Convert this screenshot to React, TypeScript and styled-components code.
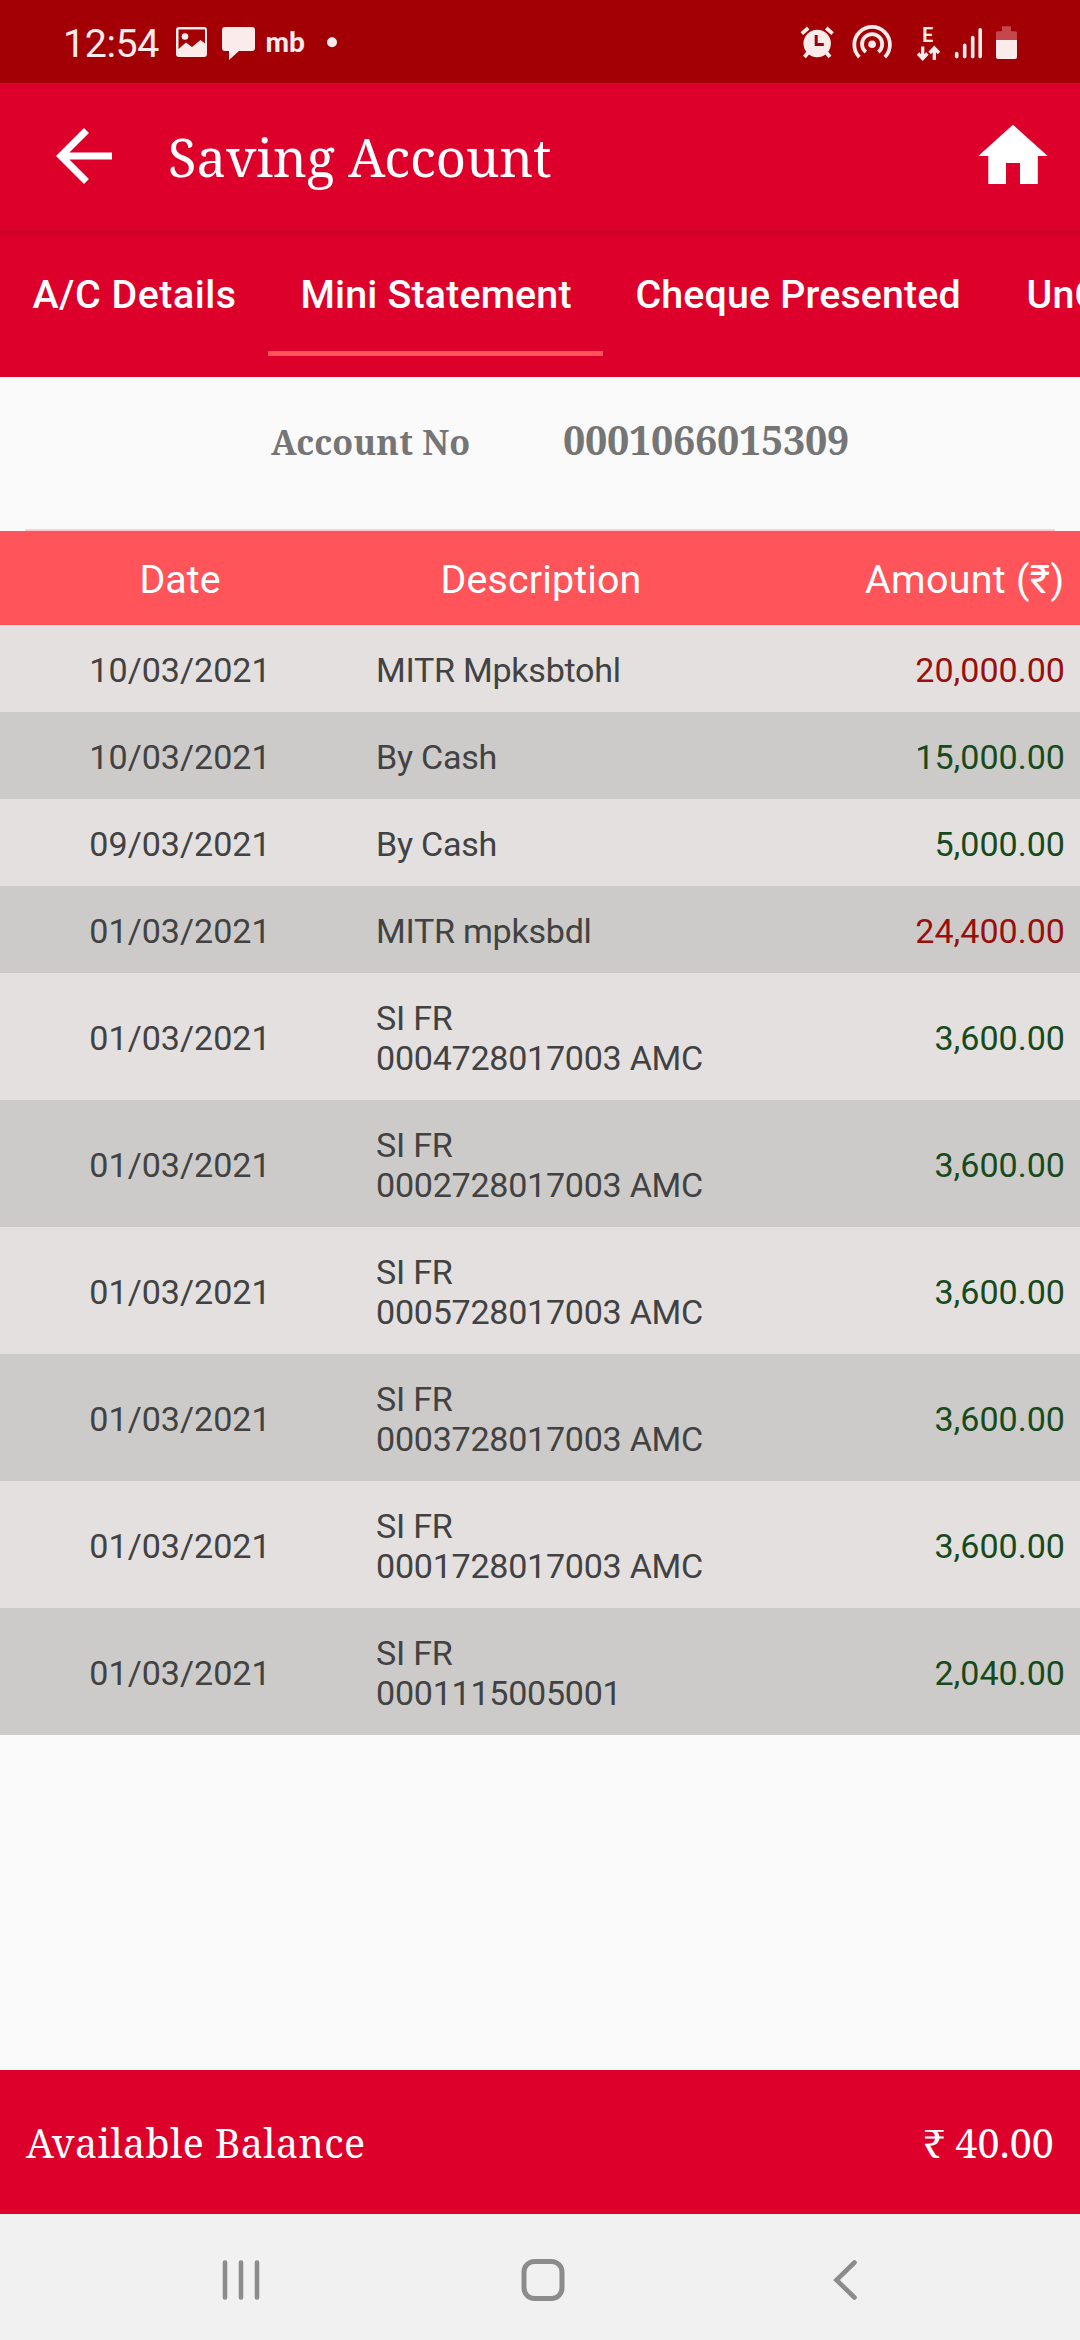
import React from "react";
import styled, { createGlobalStyle } from "styled-components";

const sans = `Roboto, "Noto Sans", sans-serif`;
const serif = `"Noto Serif", "DejaVu Serif Condensed", "DejaVu Serif", serif`;
const ICON = "#fbebea";

const GlobalStyle = createGlobalStyle`
  *, *::before, *::after { box-sizing: border-box; }
  html, body { margin: 0; padding: 0; background: #fafafa; }
  body { font-family: ${sans}; overflow: hidden; }
`;

const Screen = styled.div`
  width: 1080px;
  height: 2340px;
  display: flex;
  flex-direction: column;
  background: #fafafa;
  overflow: hidden;
`;

const StatusBar = styled.header`
  height: 83px;
  flex: none;
  display: flex;
  justify-content: space-between;
  padding: 0 60px 0 63px;
  background: #a20004;
  color: ${ICON};
`;

const StatusGroup = styled.div`
  display: flex;
  align-items: flex-start;
  svg { display: block; flex: none; }
`;

const Clock = styled.span`
  width: 110px;
  padding-top: 21px;
  font-size: 39.4px;
  line-height: 46px;
  letter-spacing: -0.4px;
`;

const AppBar = styled.div`
  height: 147px;
  flex: none;
  display: flex;
  align-items: center;
  padding: 0 32px 1px 42px;
  background: #dd002b;
  svg { display: block; flex: none; }
`;

const Title = styled.h1`
  flex: 1;
  margin: 0 0 0 42px;
  padding-top: 2px;
  font-family: ${serif};
  font-weight: 400;
  font-size: 52.5px;
  line-height: 72px;
  letter-spacing: -0.1px;
  color: #fff;
`;

const TabBar = styled.nav`
  height: 147px;
  flex: none;
  display: flex;
  padding-bottom: 21px;
  overflow: hidden;
  background: linear-gradient(#cb0028 0, #dd002b 9px);
`;

const Tab = styled.div<{ $active?: boolean; $width: number; $tracking: number }>`
  flex: none;
  width: ${(p) => p.$width}px;
  padding: 41px 0 0 32.5px;
  border-bottom: 5px solid ${(p) => (p.$active ? "#ff5459" : "transparent")};
  font-weight: 500;
  font-size: 39.4px;
  line-height: 48px;
  letter-spacing: ${(p) => p.$tracking}px;
  white-space: nowrap;
  color: #fff;
`;

const AccountPanel = styled.section`
  height: 154px;
  flex: none;
  margin: 0 25px;
  padding: 35px 0 0 246px;
  display: flex;
  align-items: baseline;
  border-bottom: 2px solid #ffcdcf;
  font-family: ${serif};
  font-weight: 700;
  color: #757575;
  line-height: 56px;
  white-space: nowrap;
`;

const AccountLabel = styled.span`
  width: 292px;
  font-size: 34.1px;
  letter-spacing: 0.15px;
`;

const AccountNumber = styled.span`
  font-size: 39.4px;
  letter-spacing: -0.25px;
`;

const Row = styled.div<{ $shade?: boolean; $tall?: boolean }>`
  height: ${(p) => (p.$tall ? 127 : 87)}px;
  flex: none;
  display: grid;
  grid-template-columns: 360px 1fr 300px;
  align-items: center;
  padding: 3px 15px 0 0;
  background: ${(p) => (p.$shade ? "#cccbc9" : "#e3e0df")};
  color: #424242;
  font-size: 34.1px;
  line-height: 40px;
`;

const HeadRow = styled(Row)`
  height: 94px;
  padding-top: 4px;
  background: #ff5459;
  color: #fff;
  font-size: 39.4px;
  line-height: 46px;
`;

const DateCell = styled.div`
  text-align: center;
`;

const DescriptionCell = styled.div`
  padding-left: 16px;
  letter-spacing: -0.27px;
  white-space: pre-line;
`;

const HeadDescription = styled.div`
  text-align: center;
  padding-right: 43px;
  letter-spacing: 0.15px;
`;

const AmountCell = styled.div<{ $debit?: boolean }>`
  text-align: right;
  color: ${(p) => (p.$debit ? "#990f0b" : "#174a1b")};
`;

const HeadAmount = styled.div`
  text-align: right;
  padding-right: 0.5px;
  letter-spacing: 0.3px;
`;

const Spacer = styled.div`
  flex: 1;
`;

const BalanceBar = styled.footer`
  height: 144px;
  flex: none;
  display: flex;
  align-items: center;
  justify-content: space-between;
  padding: 1px 26px 0;
  background: #dd002b;
  color: #fff;
  font-family: ${serif};
  font-size: 39.4px;
  line-height: 54px;
`;

const BalanceLabel = styled.span`
  letter-spacing: 0.36px;
`;

const BalanceAmount = styled.span`
  letter-spacing: 0.15px;
`;

const NavBar = styled.div`
  height: 126px;
  flex: none;
  display: grid;
  grid-template-columns: 482px 122px 482px;
  justify-content: center;
  align-items: center;
  padding: 6px 0 0 6px;
  background: #f1f1f1;
  svg { display: block; margin: 0 auto; }
`;

const rows = [
  { date: "10/03/2021", text: "MITR Mpksbtohl", amount: "20,000.00", debit: true },
  { date: "10/03/2021", text: "By Cash", amount: "15,000.00" },
  { date: "09/03/2021", text: "By Cash", amount: "5,000.00" },
  { date: "01/03/2021", text: "MITR mpksbdl", amount: "24,400.00", debit: true },
  { date: "01/03/2021", text: "SI FR\n0004728017003 AMC", amount: "3,600.00" },
  { date: "01/03/2021", text: "SI FR\n0002728017003 AMC", amount: "3,600.00" },
  { date: "01/03/2021", text: "SI FR\n0005728017003 AMC", amount: "3,600.00" },
  { date: "01/03/2021", text: "SI FR\n0003728017003 AMC", amount: "3,600.00" },
  { date: "01/03/2021", text: "SI FR\n0001728017003 AMC", amount: "3,600.00" },
  { date: "01/03/2021", text: "SI FR\n0001115005001", amount: "2,040.00" },
];

const NotificationIcons = () => (
  <svg width="180" height="83" viewBox="173 0 180 83" fill={ICON}>
    <path
      fillRule="evenodd"
      d="M179 27h25a3 3 0 0 1 3 3v24a3 3 0 0 1-3 3h-25a3 3 0 0 1-3-3V30a3 3 0 0 1 3-3zM178.500 29.500v19.500l7.500-6.500 6 4.500 8.500-7 4.500 3.500V29.500z"
    />
    <circle cx="185" cy="36.500" r="3.300" />
    <path d="M225 27h27a3 3 0 0 1 3 3v18a3 3 0 0 1-3 3h-13l-10 9v-9h-4a3 3 0 0 1-3-3V30a3 3 0 0 1 3-3z" />
    <text x="265.500" y="51.500" fontFamily="Lato, sans-serif" fontWeight="900" fontSize="28" textLength="39.500" lengthAdjust="spacingAndGlyphs">
      mb
    </text>
    <circle cx="332" cy="42.300" r="5" />
  </svg>
);

const AlarmIcon = () => (
  <svg width="36" height="83" viewBox="799 0 36 83">
    <g stroke={ICON} strokeWidth="3.800" fill="none">
      <path d="M801.800 33.600l6.400-5.600M832.600 33.600l-6.400-5.600" />
      <path d="M808.500 52l-4 5M826 52l4 5" />
    </g>
    <circle cx="817.200" cy="43.500" r="13.700" fill={ICON} />
    <path d="M816.200 35v9.400h7.600" stroke="#a20004" strokeWidth="3" fill="none" />
  </svg>
);

const HotspotIcon = () => (
  <svg width="42" height="83" viewBox="851.300 0 42 83" fill="none" stroke={ICON} strokeWidth="3.800">
    <path d="M859.700 57.200a17.800 17.800 0 1 1 25.400 0" />
    <path d="M866.200 52.100a10.100 10.100 0 1 1 12.400 0" />
    <circle cx="872.400" cy="44.300" r="3.800" fill={ICON} stroke="none" />
  </svg>
);

const NetworkIcon = () => (
  <svg width="28" height="83" viewBox="915 0 28 83">
    <text x="922.300" y="41.600" fill={ICON} fontFamily="Roboto, sans-serif" fontWeight="700" fontSize="19.500">
      E
    </text>
    <g stroke={ICON} strokeWidth="3.300" fill="none">
      <path d="M922.700 46.500v12M918 53.500l4.700 5 4.700-5" />
      <path d="M934.300 60v-12M929.600 53l4.700-5 4.700 5" />
    </g>
  </svg>
);

const SignalIcon = () => (
  <svg width="28" height="83" viewBox="954 0 28 83" stroke={ICON} strokeWidth="3.600" strokeLinecap="round">
    <path d="M956.700 53.600v3M964.700 45.200v11.400M972.700 37.500v19.100M980.200 29.900v26.700" />
  </svg>
);

const BatteryIcon = () => (
  <svg width="24" height="83" viewBox="996 0 24 83">
    <path d="M1002 26.300h9v4.900h4.500a1.500 1.500 0 0 1 1.500 1.500V40h-21v-7.300a1.500 1.500 0 0 1 1.500-1.500h4.500z" fill="#c3474b" />
    <path d="M996 40h21v17a2 2 0 0 1-2 2h-17a2 2 0 0 1-2-2z" fill={ICON} />
  </svg>
);

const SystemIcons = styled(StatusGroup)`
  svg:nth-child(2) { margin-left: 16.3px; }
  svg:nth-child(3) { margin-left: 21.7px; }
  svg:nth-child(4) { margin-left: 11px; }
  svg:nth-child(5) { margin-left: 14px; }
`;

export default function App() {
  return (
    <Screen>
      <GlobalStyle />
      <StatusBar>
        <StatusGroup>
          <Clock>12:54</Clock>
          <NotificationIcons />
        </StatusGroup>
        <SystemIcons>
          <AlarmIcon />
          <HotspotIcon />
          <NetworkIcon />
          <SignalIcon />
          <BatteryIcon />
        </SystemIcons>
      </StatusBar>
      <AppBar>
        <svg width="84" height="84" viewBox="0 0 24 24" fill="#fff">
          <path d="M20 11H7.830l5.590-5.590L12 4l-8 8 8 8 1.410-1.410L7.830 13H20v-2z" />
        </svg>
        <Title>Saving Account</Title>
        <svg width="70" height="62" viewBox="0 0 70 62" fill="#fff">
          <path d="M35 -.3L69.700 31H59.800V59H42V38H28v21H10.300v-28H.3z" />
        </svg>
      </AppBar>
      <TabBar>
        <Tab $width={268} $tracking={0.5}>A/C Details</Tab>
        <Tab $width={335} $tracking={0.15} $active>Mini Statement</Tab>
        <Tab $width={391} $tracking={0.13}>Cheque Presented</Tab>
        <Tab $width={420} $tracking={0.13}>UnCleared Cheque</Tab>
      </TabBar>
      <AccountPanel>
        <AccountLabel>Account No</AccountLabel>
        <AccountNumber>0001066015309</AccountNumber>
      </AccountPanel>
      <HeadRow>
        <DateCell>Date</DateCell>
        <HeadDescription>Description</HeadDescription>
        <HeadAmount>Amount (₹)</HeadAmount>
      </HeadRow>
      {rows.map((r, i) => (
        <Row key={i} $shade={i % 2 === 1} $tall={r.text.includes("\n")}>
          <DateCell>{r.date}</DateCell>
          <DescriptionCell>{r.text}</DescriptionCell>
          <AmountCell $debit={r.debit}>{r.amount}</AmountCell>
        </Row>
      ))}
      <Spacer />
      <BalanceBar>
        <BalanceLabel>Available Balance</BalanceLabel>
        <BalanceAmount>₹ 40.00</BalanceAmount>
      </BalanceBar>
      <NavBar>
        <svg width="40" height="42" viewBox="0 0 40 42" stroke="#8c8c8c" strokeWidth="4.600" strokeLinecap="round">
          <path d="M4 3.500v35M20 3.500v35M36 3.500v35" />
        </svg>
        <svg width="44" height="44" viewBox="0 0 44 44" fill="none" stroke="#8c8c8c" strokeWidth="5">
          <rect x="3" y="3.500" width="38" height="37" rx="10.500" />
        </svg>
        <svg width="26" height="42" viewBox="0 0 26 42" fill="none" stroke="#8c8c8c" strokeWidth="4.600" strokeLinecap="round">
          <path d="M22.500 3.500L4.500 21l18 17.500" />
        </svg>
      </NavBar>
    </Screen>
  );
}
